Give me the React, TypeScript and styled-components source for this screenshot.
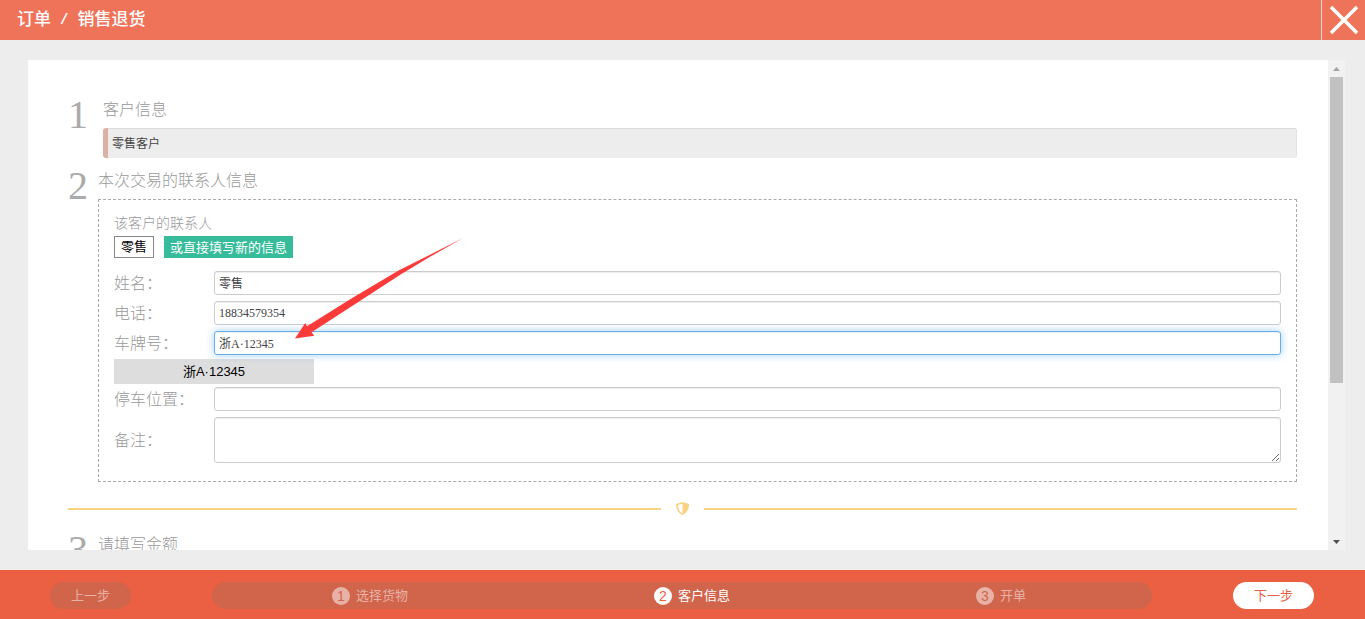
import React from "react";
import styled, { createGlobalStyle } from "styled-components";

const sans = `"Liberation Sans", "Noto Sans CJK SC", sans-serif`;
const serif = `"Liberation Serif", "Noto Sans CJK SC", serif`;

const GlobalStyle = createGlobalStyle`
  *, *::before, *::after { box-sizing: border-box; }
  body { margin: 0; background: #ededed; font-family: ${sans}; }
  button, input, textarea { font-family: inherit; margin: 0; }
  h1, h2, p, ol { margin: 0; padding: 0; font-weight: 400; }
`;

const Page = styled.div`
  display: flex;
  flex-direction: column;
  height: 100vh;
`;

const Header = styled.header`
  display: flex;
  flex: none;
  justify-content: space-between;
  height: 40px;
  padding-left: 17px;
  background: #ef7359;
`;

const Breadcrumb = styled.h1`
  display: flex;
  align-items: center;
  gap: 9px;
  color: #fff;
  font-size: 17px;
  font-weight: 500;
  line-height: 42px;
`;

const Slash = styled.span`
  font-family: "Liberation Mono", monospace;
  font-weight: 700;
  font-size: 14px;
`;

const CloseButton = styled.button`
  display: flex;
  align-items: center;
  justify-content: center;
  width: 44px;
  padding: 0;
  border: 0;
  border-left: 1px solid #e0d6d3;
  background: transparent;
  cursor: pointer;
`;

const Main = styled.main`
  display: flex;
  flex: 1;
  min-height: 0;
  padding: 20px 20px 20px 28px;
`;

const Sheet = styled.div`
  flex: 1;
  min-width: 0;
  padding: 38px 31px 0 40px;
  overflow: hidden;
  background: #fff;
`;

const ScrollTrack = styled.div`
  display: flex;
  flex-direction: column;
  flex: none;
  width: 17px;
  background: #f1f1f1;
`;

const ScrollArrow = styled.span`
  display: flex;
  flex: none;
  align-items: center;
  justify-content: center;
  height: 17px;
`;

const ScrollRail = styled.div`
  flex: 1;
  padding: 0 2px;
`;

const ScrollThumb = styled.div`
  height: 67%;
  background: #c1c1c1;
`;

const Section = styled.section`
  display: flex;
  margin-bottom: 11px;
`;

const SectionNumber = styled.span`
  flex: none;
  width: 30px;
  height: 34px;
  color: #aaa;
  font-family: ${serif};
  font-size: 40px;
  line-height: 34px;
`;

const SectionBody = styled.div<{ $inset?: boolean }>`
  flex: 1;
  min-width: 0;
  padding-left: ${(p) => (p.$inset ? 5 : 0)}px;
`;

const SectionTitle = styled.h2`
  margin-bottom: 6px;
  color: #999;
  font-size: 16px;
  font-weight: 300;
  line-height: 24px;
`;

const CustomerCard = styled.div`
  height: 30px;
  padding-left: 4px;
  border-left: 5px solid #dbb1a5;
  border-radius: 3px;
  background: #ededed;
  box-shadow: inset 0 1px 1px rgba(0, 0, 0, 0.08), inset -1px 0 0 rgba(0, 0, 0, 0.03);
  color: #444;
  font-size: 12px;
  line-height: 32px;
`;

const ContactForm = styled.form`
  position: relative;
  padding: 13px 15px 18px;
  border: 1px dashed #aaa;
`;

const Hint = styled.p`
  margin-bottom: 3px;
  color: #999;
  font-size: 14px;
  font-weight: 300;
  line-height: 20px;
`;

const Choices = styled.div`
  display: flex;
  gap: 10px;
  margin-bottom: 13px;
`;

const Choice = styled.button<{ $primary?: boolean }>`
  height: 22px;
  padding: ${(p) => (p.$primary ? "1px 6px 0" : "0 6px")};
  border: ${(p) => (p.$primary ? "0" : "1px solid #888")};
  background: ${(p) => (p.$primary ? "#37bc9b" : "#fff")};
  color: ${(p) => (p.$primary ? "#fff" : "#000")};
  font-size: 13px;
  line-height: 20px;
  cursor: pointer;
`;

const Fields = styled.div`
  display: flex;
  flex-direction: column;
  gap: 6px;
`;

const Field = styled.div`
  display: flex;
  align-items: center;
`;

const FieldLabel = styled.label`
  flex: none;
  width: 100px;
  padding-top: 2px;
  color: #999;
  font-size: 16px;
  font-weight: 300;
  line-height: 22px;
`;

const TextInput = styled.input<{ $active?: boolean }>`
  flex: 1;
  min-width: 0;
  height: 24px;
  padding: 0 4px;
  border: 1px solid ${(p) => (p.$active ? "#66afe9" : "#ccc")};
  border-radius: 3px;
  outline: 0;
  background: #fff;
  box-shadow: inset 0 1px 1px rgba(0, 0, 0, 0.075)
    ${(p) => (p.$active ? ", 0 0 8px rgba(102, 175, 233, 0.6)" : "")};
  color: #444;
  font-family: ${serif};
  font-size: 12px;
`;

const NoteInput = styled.textarea`
  flex: 1;
  min-width: 0;
  height: 46px;
  padding: 4px;
  border: 1px solid #ccc;
  border-radius: 3px;
  outline: 0;
  background: #fff;
  box-shadow: inset 0 1px 1px rgba(0, 0, 0, 0.075);
  color: #444;
  font-family: ${serif};
  font-size: 12px;
  resize: both;
`;

const Suggestion = styled.button`
  display: block;
  width: 200px;
  height: 25px;
  margin: 4px 0 3px;
  padding: 0;
  border: 0;
  background: #ddd;
  color: #000;
  font-size: 13px;
  line-height: 25px;
  text-align: center;
  cursor: pointer;
`;

const Pointer = styled.svg`
  position: absolute;
  top: 36px;
  left: 194px;
  pointer-events: none;
`;

const Divider = styled.div`
  display: flex;
  align-items: center;
  gap: 15px;
  height: 14px;
  margin: 20px 0 17px;
`;

const Rule = styled.span`
  flex: 1;
  height: 2px;
  background: #fad284;
`;

const Footer = styled.footer`
  display: flex;
  flex: none;
  gap: 81px;
  padding: 12px 51px 10px 50px;
  background: #eb5f42;
`;

const NavButton = styled.button<{ $primary?: boolean }>`
  flex: none;
  width: 81px;
  height: 27px;
  padding: 0;
  border: 0;
  border-radius: 14px;
  background: ${(p) => (p.$primary ? "#fff" : "#d0654c")};
  color: ${(p) => (p.$primary ? "#eb5f42" : "#e7b2a5")};
  font-size: 13px;
  line-height: 27px;
`;

const Steps = styled.ol`
  display: grid;
  flex: 1;
  grid-template-columns: 1fr 1fr auto;
  align-items: center;
  height: 27px;
  padding: 0 126px 0 120px;
  border-radius: 14px;
  background: #d0654c;
  list-style: none;
`;

const Step = styled.li<{ $current?: boolean }>`
  display: flex;
  align-items: center;
  gap: 6px;
  color: ${(p) => (p.$current ? "#fff" : "#e7b2a5")};
  font-size: 13px;
  line-height: 18px;
`;

const StepNumber = styled.span<{ $current?: boolean }>`
  width: 18px;
  height: 18px;
  border-radius: 50%;
  background: ${(p) => (p.$current ? "#fff" : "#e7b2a5")};
  color: ${(p) => (p.$current ? "#eb5f42" : "#d0654c")};
  font-size: 14px;
  text-align: center;
`;

const steps = ["选择货物", "客户信息", "开单"];
const currentStep = 1;

export default function App() {
  return (
    <Page>
      <GlobalStyle />
      <Header>
        <Breadcrumb>
          <span>订单</span>
          <Slash>/</Slash>
          <span>销售退货</span>
        </Breadcrumb>
        <CloseButton type="button" aria-label="关闭">
          <svg width="30" height="30" viewBox="0 0 30 30">
            <path d="M2 2 28 28M28 2 2 28" stroke="#fff" strokeWidth="3.6" />
          </svg>
        </CloseButton>
      </Header>

      <Main>
        <Sheet>
          <Section>
            <SectionNumber>1</SectionNumber>
            <SectionBody $inset>
              <SectionTitle>客户信息</SectionTitle>
              <CustomerCard>零售客户</CustomerCard>
            </SectionBody>
          </Section>

          <Section>
            <SectionNumber>2</SectionNumber>
            <SectionBody>
              <SectionTitle>本次交易的联系人信息</SectionTitle>
              <ContactForm onSubmit={(e) => e.preventDefault()}>
                <Hint>该客户的联系人</Hint>
                <Choices>
                  <Choice type="button">零售</Choice>
                  <Choice type="button" $primary>
                    或直接填写新的信息
                  </Choice>
                </Choices>
                <Fields>
                  <Field>
                    <FieldLabel htmlFor="name">姓名：</FieldLabel>
                    <TextInput id="name" defaultValue="零售" />
                  </Field>
                  <Field>
                    <FieldLabel htmlFor="phone">电话：</FieldLabel>
                    <TextInput id="phone" defaultValue="18834579354" />
                  </Field>
                  <Field>
                    <FieldLabel htmlFor="plate">车牌号：</FieldLabel>
                    <TextInput id="plate" $active defaultValue="浙A·12345" />
                  </Field>
                </Fields>
                <Suggestion type="button">浙A·12345</Suggestion>
                <Fields>
                  <Field>
                    <FieldLabel htmlFor="parking">停车位置：</FieldLabel>
                    <TextInput id="parking" />
                  </Field>
                  <Field>
                    <FieldLabel htmlFor="note">备注：</FieldLabel>
                    <NoteInput id="note" />
                  </Field>
                </Fields>
                <Pointer width="172" height="106" viewBox="0 0 172 106">
                  <path
                    d="M2 102.500 12.200 87 14 90.200 60 61.500 106 34.300 136.500 18.900 170 2 137.500 20.600 108 38.300 63 67.500 18.600 96.300 21.200 99.800Z"
                    fill="#fb3b39"
                  />
                </Pointer>
              </ContactForm>
            </SectionBody>
          </Section>

          <Divider>
            <Rule />
            <svg width="13" height="14" viewBox="0 0 13 13" preserveAspectRatio="xMidYMin">
              <path
                fillRule="evenodd"
                fill="#fad284"
                d="M6.500 0 13 2C13 7.500 10.800 11.300 6.500 13 2.200 11.300 0 7.500 0 2ZM6.500 1.800 1.900 3.100C2.100 7 3.500 9.900 6.500 11.300Z"
              />
            </svg>
            <Rule />
          </Divider>

          <Section>
            <SectionNumber>3</SectionNumber>
            <SectionBody>
              <SectionTitle>请填写金额</SectionTitle>
            </SectionBody>
          </Section>
        </Sheet>

        <ScrollTrack aria-hidden="true">
          <ScrollArrow>
            <svg width="7" height="4" viewBox="0 0 7 4">
              <path d="M0 4 3.500 0 7 4Z" fill="#a3a3a3" />
            </svg>
          </ScrollArrow>
          <ScrollRail>
            <ScrollThumb />
          </ScrollRail>
          <ScrollArrow>
            <svg width="7" height="4" viewBox="0 0 7 4">
              <path d="M0 0 3.500 4 7 0Z" fill="#505050" />
            </svg>
          </ScrollArrow>
        </ScrollTrack>
      </Main>

      <Footer>
        <NavButton type="button">上一步</NavButton>
        <Steps>
          {steps.map((label, i) => (
            <Step key={label} $current={i === currentStep}>
              <StepNumber $current={i === currentStep}>{i + 1}</StepNumber>
              {label}
            </Step>
          ))}
        </Steps>
        <NavButton type="button" $primary>
          下一步
        </NavButton>
      </Footer>
    </Page>
  );
}
